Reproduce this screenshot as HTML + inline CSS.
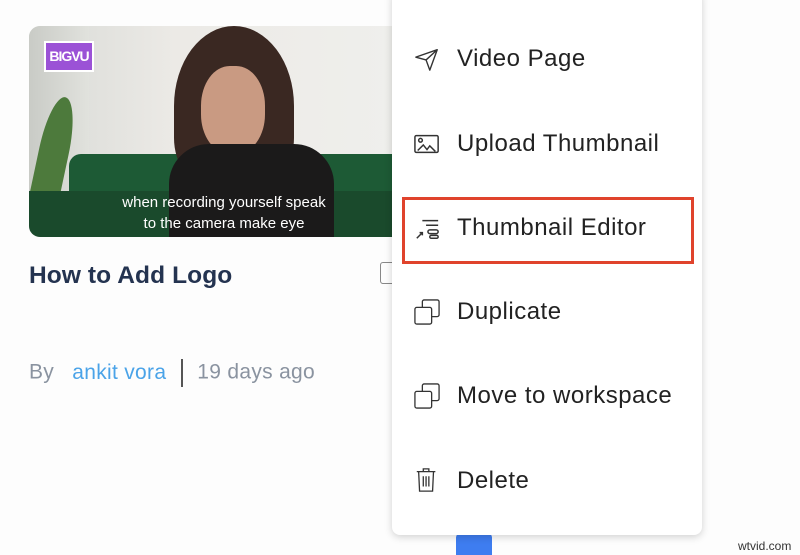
<!DOCTYPE html>
<html><head><style>
html,body{margin:0;width:800px;height:555px;overflow:hidden}
body{background:#fdfdfd;position:relative;font-family:"Liberation Sans",sans-serif}
.thumb{position:absolute;left:29px;top:26px;width:366px;height:211px;border-radius:11px 0 0 11px;overflow:hidden;background:linear-gradient(90deg,#d8dad6,#eceae6 40%,#efefec)}
.menu{position:absolute;left:392px;top:-10px;width:310px;height:545px;background:#fff;border-radius:8px;box-shadow:0 2px 8px rgba(0,0,0,.18)}
.item{position:absolute;left:65px;font-size:24px;color:#222;line-height:28px;letter-spacing:0.5px}
.ic{position:absolute;left:22px;width:26px;height:26px}
</style></head><body>
<div class="thumb">
 <div style="position:absolute;left:0;top:0;width:60px;height:211px;background:linear-gradient(90deg,#c9cbc6,#e1e2dd)"></div>
 <div style="position:absolute;left:10px;top:70px;width:30px;height:110px;background:#4d7a3c;border-radius:50% 50% 0 0;transform:rotate(12deg)"></div>
 <div style="position:absolute;left:40px;top:128px;width:340px;height:90px;background:#1d5a35;border-radius:12px"></div>
 <div style="position:absolute;left:0;top:165px;width:366px;height:46px;background:#1a4a2c"></div>
 <div style="position:absolute;left:145px;top:0;width:120px;height:160px;background:#3a2822;border-radius:50% 50% 30% 30%"></div>
 <div style="position:absolute;left:172px;top:40px;width:64px;height:88px;background:#c99a82;border-radius:45%"></div>
 <div style="position:absolute;left:140px;top:118px;width:165px;height:100px;background:#1b1a1a;border-radius:40px 40px 0 0"></div>
 <div style="position:absolute;left:15px;top:15px;width:50px;height:31px;background:#9b52d6;border:2px solid #fff;box-sizing:border-box;color:#fff;font:bold 14px 'Liberation Sans',sans-serif;letter-spacing:-1px;text-align:center;line-height:27px">BIGVU</div>
 <div style="position:absolute;left:0;width:366px;top:166px;text-align:center;color:#fff;font-size:15px;line-height:21px;padding-left:12px">when recording yourself speak<br>to the camera make eye</div>
</div>
<div style="position:absolute;left:29px;top:262px;font-size:24.5px;font-weight:bold;color:#243350;letter-spacing:0.1px">How to Add Logo</div>
<div style="position:absolute;left:29px;top:359px;font-size:21px;color:#8a93a0;letter-spacing:0.3px">By <span style="color:#4aa3e8;margin-left:12px">ankit vora</span><span style="display:inline-block;width:2px;height:28px;background:#555;vertical-align:middle;margin:0 14px 0 15px"></span>19 days ago</div>
<div style="position:absolute;left:380px;top:262px;width:14px;height:20px;border:1.5px solid #888;border-radius:3px"></div>
<div style="position:absolute;left:456px;top:532px;width:36px;height:30px;background:#3e7df0;border-radius:6px"></div>
<div class="menu">
 <svg class="ic" style="top:56px" viewBox="0 0 28 28" fill="none" stroke="#333" stroke-width="1.5" stroke-linejoin="round"><path d="M2 12L25 4L17 26L13 15Z M13 15L25 4"/></svg>
 <div class="item" style="top:55px">Video Page</div>
 <svg class="ic" style="top:141px" viewBox="0 0 28 28" fill="none" stroke="#333" stroke-width="1.6"><rect x="1" y="5" width="25" height="18" rx="1.5"/><circle cx="7" cy="10" r="2"/><path d="M4 21l6-6 4 5 3-4 6 6"/></svg>
 <div class="item" style="top:140px">Upload Thumbnail</div>
 <svg class="ic" style="top:225px" viewBox="0 0 28 28" fill="none" stroke="#333" stroke-width="1.6"><path d="M9 6h17 M13 11h13 M3 25l6-6 M6 19h3v3"/><rect x="15" y="16" width="11" height="4" rx="2"/><rect x="17" y="22" width="9" height="3" rx="1.5"/></svg>
 <div class="item" style="top:224px">Thumbnail Editor</div>
 <div style="position:absolute;left:10px;top:207px;width:292px;height:67px;border:3px solid #e0432c;box-sizing:border-box"></div>
 <svg class="ic" style="top:309px" viewBox="0 0 28 28" fill="none" stroke="#333" stroke-width="1.4"><rect x="9" y="1" width="18" height="18" rx="2"/><rect x="1" y="9" width="18" height="18" rx="2" fill="#fff"/></svg>
 <div class="item" style="top:308px">Duplicate</div>
 <svg class="ic" style="top:393px" viewBox="0 0 28 28" fill="none" stroke="#333" stroke-width="1.4"><rect x="9" y="1" width="18" height="18" rx="2"/><rect x="1" y="9" width="18" height="18" rx="2" fill="#fff"/></svg>
 <div class="item" style="top:392px">Move to workspace</div>
 <svg class="ic" style="top:477px" viewBox="0 0 28 28" fill="none" stroke="#333" stroke-width="1.4"><path d="M3 5h20 M10 5V2h6v3 M5 5l1 21h14l1-21 M10 10v11 M13 10v11 M16 10v11"/></svg>
 <div class="item" style="top:477px">Delete</div>
</div>
<div style="position:absolute;left:738px;top:539px;font-size:12px;color:#333">wtvid.com</div>
</body></html>
